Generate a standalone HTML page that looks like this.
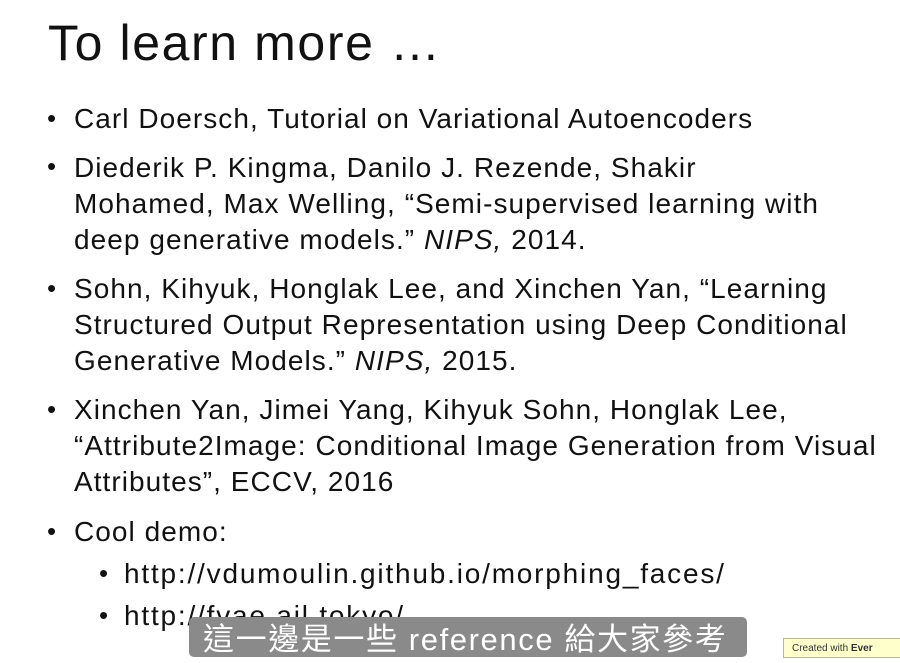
<!DOCTYPE html>
<html><head><meta charset="utf-8"><style>
body{margin:0;width:900px;height:652px;background:#fff;overflow:hidden;position:relative;font-family:"Liberation Sans",sans-serif;color:#111}
.t{position:absolute;left:48px;top:14px;font-size:50px;letter-spacing:1.6px}
.l{position:absolute;left:74px;font-size:28px;line-height:36px;letter-spacing:1.05px;white-space:nowrap}
.b{position:absolute;font-size:26px}
i{font-style:italic}
.sub{position:absolute;left:189px;top:617px;width:558px;height:40px;background:#8a8a8a;border-radius:5px;color:#fff;font-family:"Liberation Sans","Noto Sans CJK TC",sans-serif;font-size:31px;line-height:46px;padding-left:14px;box-sizing:border-box;white-space:nowrap;letter-spacing:1.6px}
.wm{position:absolute;left:783px;top:638px;width:130px;height:20px;background:#ffffcc;border:1px solid #b8b890;font-size:10px;padding:4px 0 0 8px;box-sizing:border-box;color:#333}
</style></head><body>
<div class="t">To learn more …</div>
<div class="b" style="left:47px;top:103px">•</div>
<div class="l" style="top:101px">Carl Doersch, Tutorial on Variational Autoencoders</div>
<div class="b" style="left:47px;top:151px">•</div>
<div class="l" style="top:150px">Diederik P. Kingma, Danilo J. Rezende, Shakir<br>Mohamed, Max Welling, “Semi-supervised learning with<br>deep generative models.” <i>NIPS,</i> 2014.</div>
<div class="b" style="left:47px;top:273px">•</div>
<div class="l" style="top:271px">Sohn, Kihyuk, Honglak Lee, and Xinchen Yan, “Learning<br>Structured Output Representation using Deep Conditional<br>Generative Models.” <i>NIPS,</i> 2015.</div>
<div class="b" style="left:47px;top:394px">•</div>
<div class="l" style="top:392px">Xinchen Yan, Jimei Yang, Kihyuk Sohn, Honglak Lee,<br>“Attribute2Image: Conditional Image Generation from Visual<br>Attributes”, ECCV, 2016</div>
<div class="b" style="left:47px;top:516px">•</div>
<div class="l" style="top:514px">Cool demo:</div>
<div class="b" style="left:99px;top:558px">•</div>
<div class="l" style="left:124px;top:556px;letter-spacing:1.8px">http://vdumoulin.github.io/morphing_faces/</div>
<div class="b" style="left:99px;top:600px">•</div>
<div class="l" style="left:124px;top:598px;letter-spacing:1.8px">http://fvae.ail.tokyo/</div>
<div class="sub">這一邊是一些 reference 給大家參考</div>
<div class="wm">Created with <b>Ever</b></div>
</body></html>
